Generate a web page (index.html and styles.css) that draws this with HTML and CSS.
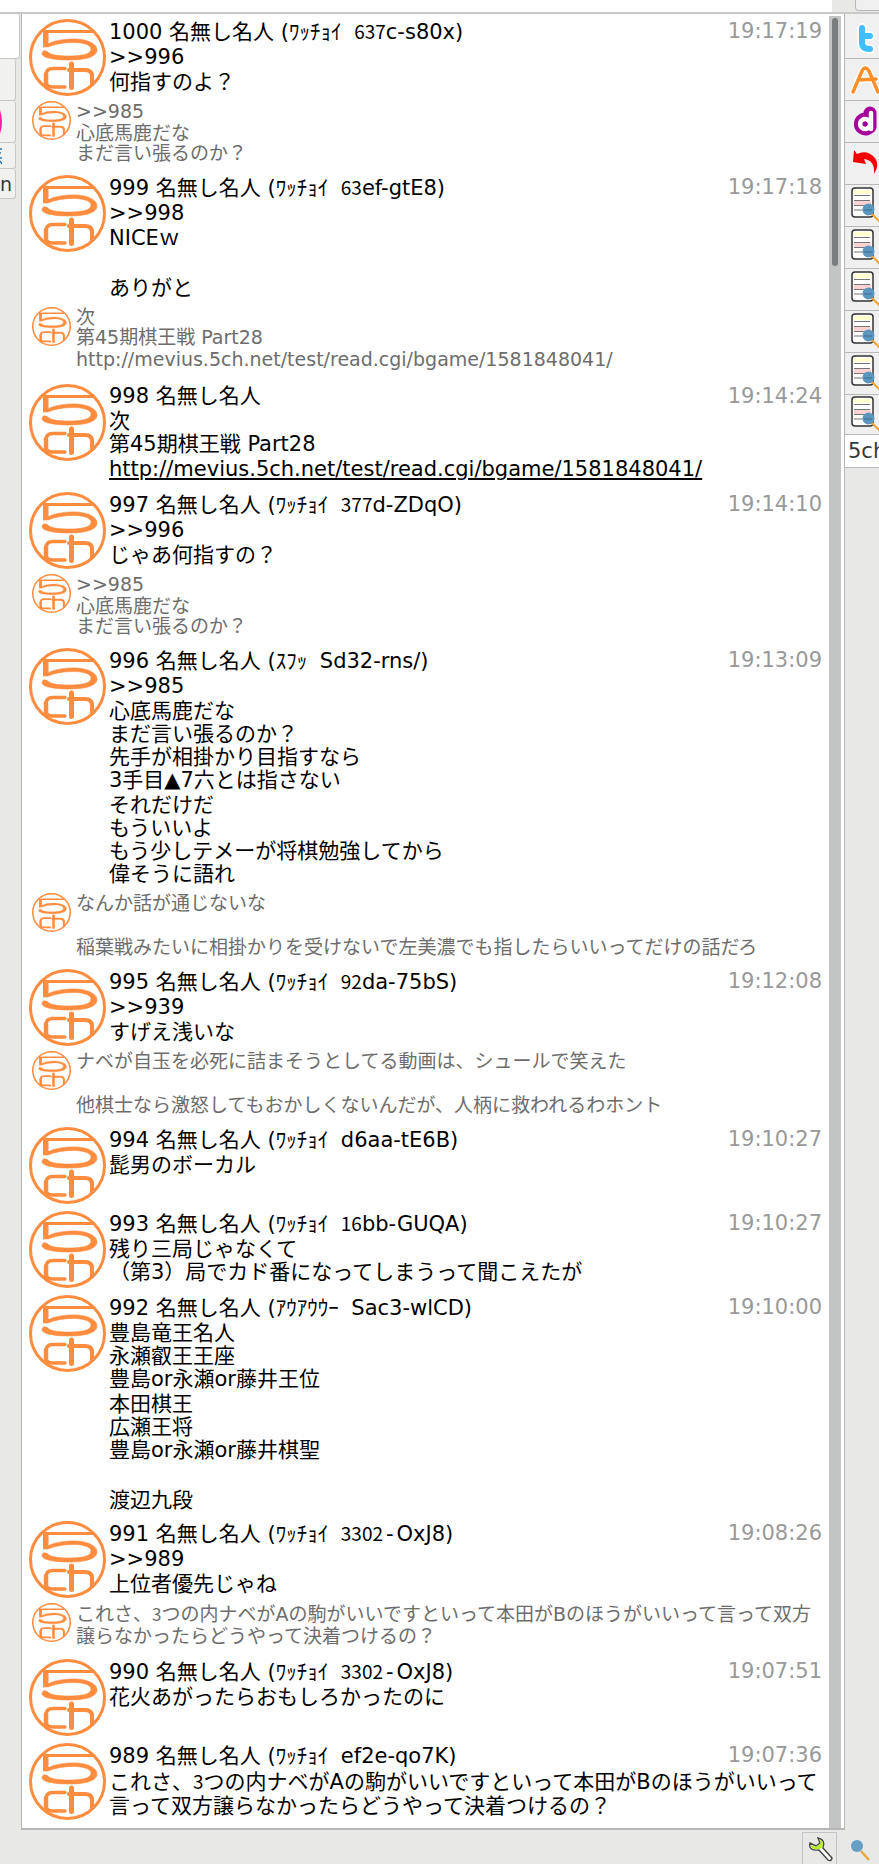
FILE: index.html
```html
<!DOCTYPE html>
<html lang="ja">
<head>
<meta charset="utf-8">
<title>5ch</title>
<link rel="stylesheet" href="styles.css">
</head>
<body>
<svg class="defs" aria-hidden="true">
  <symbol id="logo" viewBox="0 0 77 77">
    <circle cx="38.500" cy="38.500" r="37" fill="none" stroke="#ff8c3f" stroke-width="3"/>
    <path fill="#ff8c3f" d="M14 11H64V14H19.500V25L14 28z"/>
    <path fill="#ff8c3f" stroke="#ff8c3f" stroke-width=".6" d="M14 28C22 21 38 19.500 48 20C60 21 68 25 68 31C68 38 56 41 40 41C26 41 14 39 13 35C13 31 17 31 20 34C23 36 30 37 40 37C54 37 62 35 62 30C62 25 52 23.500 44 23.500C34 23.500 26 25 19 28z"/>
    <g fill="none" stroke="#ff8c3f" stroke-linecap="round">
      <path stroke-width="3.400" d="M36 49.500H24Q17 49.500 17 56V63Q17 68 24 68H36"/>
      <path stroke-width="4.500" d="M17 55V67"/>
      <path stroke-width="5" d="M42.500 45V68.500"/>
      <path stroke-width="4" d="M40 51H56Q63 51 63 57V65"/>
    </g>
  </symbol>
  <symbol id="doc" viewBox="0 0 40 40">
    <rect x="7" y="2" width="21" height="29" rx="3" fill="#fff" stroke="#333" stroke-width="1.500"/>
    <path d="M9 4h17v4H9z" fill="#ffffcf"/><path d="M9 15h17v4H9z" fill="#ffd3d3"/>
    <path d="M9 9.500h16M9 14.500h16M9 19.500h16M9 24h16" stroke="#777" stroke-width="1.200"/>
    <path d="M26 27L36 37" stroke="#eea638" stroke-width="2"/>
    <circle cx="23.500" cy="23.500" r="6" fill="#5c95bd"/><path d="M19 24h8" stroke="#3b6c95"/>
  </symbol>
</svg>
<div class="app">
  <div class="topbar"><div class="topfield"></div><div class="topcorner"><button class="topbutton" aria-label="menu"></button></div></div>
  <nav class="left" aria-label="tabs">
    <button class="ltab on" aria-label="tab"></button>
    <button class="ltab" aria-label="tab"></button>
    <button class="ltab" aria-label="tab"><svg width="3" height="24" viewBox="0 0 3 24"><path d="M0 0Q4 12 0 24z" fill="#ff1fa0"/></svg></button>
    <button class="ltab low" aria-label="tab"><svg width="2" height="18" viewBox="0 0 2 18"><path d="M0 2h2M0 6h1M0 11h2M0 14l2 3" stroke="#2476ad" stroke-width="1.500"/></svg></button>
    <button class="ltab last">n</button>
  </nav>
  <main class="panel">
    <div class="list" id="list"></div>
    <div class="track"><div class="thumb"></div></div>
  </main>
  <nav class="right" aria-label="services">
    <button class="rtab first" aria-label="Twitter"><svg width="40" height="40" viewBox="0 0 40 40"><path d="M17 11V26Q17 32 25 32M17 19H25" fill="none" stroke="#fff" stroke-width="10" stroke-linecap="round"/><path d="M17 11V26Q17 32 25 32M17 19H25" fill="none" stroke="#40bfff" stroke-width="6" stroke-linecap="round"/></svg></button>
    <button class="rtab" aria-label="A"><svg width="40" height="40" viewBox="0 0 40 40"><path d="M8 32L17 11Q20 5 24 11L33 32M13 20L31 19" fill="none" stroke="#fff" stroke-width="6" stroke-linecap="round"/><path d="M8 32L17 11Q20 5 24 11L33 32M13 20L31 19" fill="none" stroke="#ff8f29" stroke-width="3.500" stroke-linecap="round"/></svg></button>
    <button class="rtab" aria-label="d"><svg width="40" height="40" viewBox="0 0 40 40"><path d="M25 11V25M25 20A5 5 0 1 0 25 24" fill="none" stroke="#a4009c" stroke-width="13" stroke-linecap="round"/><path d="M26 11V27M25 21A5 5 0 1 0 25 23" fill="none" stroke="#fff" stroke-width="4.500" stroke-linecap="round"/></svg></button>
    <button class="rtab" aria-label="undo"><svg width="40" height="40" viewBox="0 0 40 40"><path d="M9 6L12 10Q22 5 30 14Q35 21 29 30Q30 16 19 15L21 20L8 18z" fill="#f20000"/></svg></button>
    <button class="rtab" aria-label="search 1"><svg width="40" height="40"><use href="#doc"/></svg></button>
    <button class="rtab" aria-label="search 2"><svg width="40" height="40"><use href="#doc"/></svg></button>
    <button class="rtab" aria-label="search 3"><svg width="40" height="40"><use href="#doc"/></svg></button>
    <button class="rtab" aria-label="search 4"><svg width="40" height="40"><use href="#doc"/></svg></button>
    <button class="rtab" aria-label="search 5"><svg width="40" height="40"><use href="#doc"/></svg></button>
    <button class="rtab end" aria-label="search 6"><svg width="40" height="40"><use href="#doc"/></svg></button>
    <button class="rtab current">5ch</button>
  </nav>
  <footer class="footer">
    <button class="tool boxed" aria-label="settings"><svg width="28" height="28" viewBox="0 0 28 28"><path d="M13 14L22 24Q25 26 26 22L17 12Q20 4 12 2L14 7L10 10L4 7Q2 15 13 14z" fill="#fff" stroke="#444" stroke-width="1.400"/><path d="M13 13Q4 14 5 9L10 11L15 7L13 3Q19 5 16 12z" fill="#b9ee25"/></svg></button>
    <button class="tool" aria-label="search"><svg width="22" height="24" viewBox="0 0 22 24"><path d="M12 13L20 22" stroke="#e9a640" stroke-width="2.500"/><circle cx="8" cy="8" r="6" fill="#679ec4"/></svg></button>
  </footer>
</div>
<script src="app.js"></script>
</body>
</html>
```
FILE: styles.css
```css
* { box-sizing: border-box; }
body { margin: 0; background: #e8e8e6; color: #000; font-family: "DejaVu Sans", "Noto Sans CJK JP", sans-serif; font-size: 21px; }
button { margin: 0; padding: 0; font: inherit; color: inherit; background: none; border: 0; text-align: left; }
svg { display: block; flex: none; }
.defs { position: absolute; width: 0; height: 0; }
.app { display: grid; grid-template-columns: 21px minmax(0, 1fr) 34px; grid-template-rows: 14px auto 1fr; min-height: 100vh; }
.topbar { grid-column: 1 / -1; display: flex; border-bottom: 2px solid #c9c9c7; }
.topfield { flex: 1; background: #fff; }
.topcorner { width: 47px; padding-left: 23px; overflow: hidden; }
.topbutton { display: block; width: 40px; height: 11px; border: 1px solid #b9b9b7; border-top: 0; border-radius: 0 0 0 4px; background: #f0f0f0; }
.left { overflow: hidden; }
.ltab { display: flex; align-items: center; width: 16px; height: 42px; background: #f1f1f0; border: solid #c6c6c6; border-width: 0 1px 1px 0; border-radius: 0 3px 3px 0; overflow: hidden; }
.ltab.on { width: 20px; height: 45px; background: #fff; }
.ltab.low { height: 26px; }
.ltab.last { height: 30px; font-size: 19px; color: #34383b; }
.panel { display: flex; background: #fff; border: solid #b6b6b4; border-width: 0 1px 2px; padding-right: 3px; }
.list { flex: 1; min-width: 0; padding: 5px 7px 1px 7px; }
.track { width: 12px; margin-top: 2px; padding: 2px 3px; background: #c3c5c4; }
.thumb { height: 248px; border-radius: 3px; background: #7a7e7e; }
.post { padding-bottom: 2px; }
.main { display: flex; }
.logo { width: 77px; height: 77px; margin-bottom: 5px; }
.text { flex: 1; min-width: 0; padding: 1px 0 7px 3px; }
.head { display: flex; justify-content: space-between; }
.time { color: #999; }
.line { line-height: 23px; min-height: 23px; }
.mixed { padding-bottom: 2px; min-height: 25px; }
.wrap { line-height: 24px; }
.kana { padding-right: 6px; }
.kana, .narrow { font-family: "Noto Sans CJK JP", sans-serif; line-height: 1; }
.narrow { font-size: 19px; }
.dash { padding: 0 3px; }
.link { color: inherit; }
.quote { display: flex; padding: 0 0 10px 3px; color: #6d6d6d; font-size: 19px; }
.quote .logo { width: 39px; height: 39px; margin: 0; }
.quote .text { padding: 0 0 0 5px; }
.quote .line { line-height: 20px; min-height: 20px; }
.quote .mixed { padding-bottom: 2px; min-height: 22px; }
.quote .blank { min-height: 24px; }
.quote .address { padding-bottom: 3px; }
.quote .wrap { line-height: 22px; }
.quote .narrow { font-size: 17px; }
.right { display: flex; flex-direction: column; overflow: hidden; }
.rtab { display: block; height: 42px; background: #f0f0f0; border-bottom: 1px solid #b9b9b9; overflow: hidden; }
.rtab.first { height: 45px; padding-top: 2px; }
.rtab.end { height: 40px; }
.rtab.current { height: 33px; padding-left: 3px; background: #fff; color: #34383b; }
.footer { grid-column: 1 / -1; display: flex; justify-content: flex-end; align-items: flex-start; gap: 12px; padding: 2px 8px 0 0; }
.tool { display: flex; align-items: center; justify-content: center; width: 22px; height: 35px; }
.tool.boxed { width: 35px; border: 1px solid #c3c3c8; }
```
FILE: app.js
```js
const url = 'http://mevius.5ch.net/test/read.cgi/bgame/1581848041/';
const longText = 'これさ、[3]つの内ナベがAの駒がいいですといって本田がBのほうがいいって言って双方譲らなかったらどうやって決着つけるの？';
const wacchoi = 'ﾜｯﾁｮｲ';
const posts = [
  [1000, wacchoi, '[637]c-s80x', '19:17:19', ['>>996', '何指すのよ？'], ['>>985', '心底馬鹿だな', 'まだ言い張るのか？']],
  [999, wacchoi, '[63]ef-gtE8', '19:17:18', ['>>998', 'NICEｗ', '', 'ありがと'], ['次', '第45期棋王戦 Part28', url]],
  [998, '', '', '19:14:24', ['次', '第45期棋王戦 Part28', url]],
  [997, wacchoi, '[377]d-ZDqO', '19:14:10', ['>>996', 'じゃあ何指すの？'], ['>>985', '心底馬鹿だな', 'まだ言い張るのか？']],
  [996, 'ｽﾌｯ', 'Sd32-rns/', '19:13:09', ['>>985', '心底馬鹿だな', 'まだ言い張るのか？', '先手が相掛かり目指すなら', '3手目▲7六とは指さない', 'それだけだ', 'もういいよ', 'もう少しテメーが将棋勉強してから', '偉そうに語れ'], ['なんか話が通じないな', '', '稲葉戦みたいに相掛かりを受けないで左美濃でも指したらいいってだけの話だろ']],
  [995, wacchoi, '[92]da-75bS', '19:12:08', ['>>939', 'すげえ浅いな'], ['ナベが自玉を必死に詰まそうとしてる動画は、シュールで笑えた', '', '他棋士なら激怒してもおかしくないんだが、人柄に救われるわホント']],
  [994, wacchoi, 'd6aa-tE6B', '19:10:27', ['髭男のボーカル']],
  [993, wacchoi, '[16]bb-GUQA', '19:10:27', ['残り三局じゃなくて', '（第3）局でカド番になってしまうって聞こえたが']],
  [992, 'ｱｳｱｳｳｰ', 'Sac3-wlCD', '19:10:00', ['豊島竜王名人', '永瀬叡王王座', '豊島or永瀬or藤井王位', '本田棋王', '広瀬王将', '豊島or永瀬or藤井棋聖', '', '渡辺九段']],
  [991, wacchoi, '[3302]~OxJ8', '19:08:26', ['>>989', '上位者優先じゃね'], [longText]],
  [990, wacchoi, '[3302]~OxJ8', '19:07:51', ['花火あがったらおもしろかったのに']],
  [989, wacchoi, 'ef2e-qo7K', '19:07:36', [longText]]
];
const markup = s => s.replace(/&/g, '&amp;').replace(/>/g, '&gt;')
  .replace(/\[(.*?)\]/g, '<span class="narrow">$1</span>')
  .replace('~', '<span class="dash">-</span>');
function kindOf(s) {
  if (s === longText) return 'line wrap';
  if (s === '') return 'line mixed blank';
  if (s === url) return 'line mixed address';
  return /[\x21-\x7e]/.test(s) ? 'line mixed' : 'line';
}
function line(s, linked) {
  const body = s === url && linked ? `<a class="link" href="${s}">${s}</a>` : markup(s);
  return `<div class="${kindOf(s)}">${body}</div>`;
}
const logo = '<svg class="logo" aria-hidden="true"><use href="#logo"/></svg>';
document.getElementById('list').innerHTML = posts.map(([no, kana, id, time, body, quote]) => `
  <article class="post">
    <div class="main">${logo}
      <div class="text">
        <div class="line mixed head"><span>${no} 名無し名人${kana ? ` (<span class="kana">${kana}</span> ${markup(id)})` : ''}</span><time class="time">${time}</time></div>
        ${body.map(s => line(s, true)).join('')}
      </div>
    </div>
    ${quote ? `<div class="quote">${logo}<div class="text">${quote.map(s => line(s, false)).join('')}</div></div>` : ''}
  </article>`).join('');
```
